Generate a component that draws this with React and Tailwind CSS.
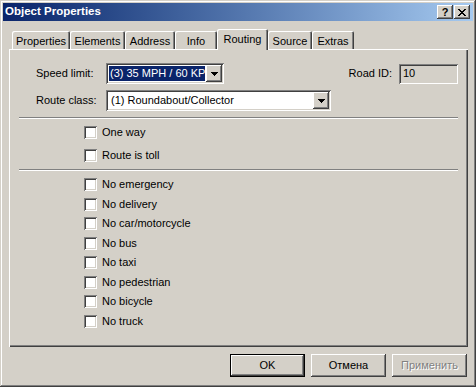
import React from "react";

const LABELS = {
  TITLE: "Object Properties",
  SPEED: "Speed limit:",
  SPEED_VALUE: "(3) 35 MPH / 60 KPH",
  ROUTE_CLASS: "Route class:",
  ROUTE_VALUE: "(1) Roundabout/Collector",
  ROAD_ID: "Road ID:",
  OK: "OK",
  CANCEL: "Отмена",
  APPLY: "Применить",
};

const TABS = [
  { label: "Properties", w: "w-[58px]" },
  { label: "Elements", w: "w-[55px]" },
  { label: "Address", w: "w-[50px]" },
  { label: "Info", w: "w-[42px]" },
  { label: "Routing", w: "w-[51px]", active: true },
  { label: "Source", w: "w-[44px]" },
  { label: "Extras", w: "w-[42px]" },
];

const RESTRICTIONS = [
  "No emergency",
  "No delivery",
  "No car/motorcycle",
  "No bus",
  "No taxi",
  "No pedestrian",
  "No bicycle",
  "No truck",
];

const raised =
  "shadow-[inset_-1px_-1px_#404040,inset_1px_1px_#ffffff,inset_-2px_-2px_#808080,inset_2px_2px_#d4d0c8]";
const sunken =
  "shadow-[inset_1px_1px_#808080,inset_-1px_-1px_#ffffff,inset_2px_2px_#404040,inset_-2px_-2px_#d4d0c8]";

function Arrow() {
  return (
    <svg width="7" height="4" viewBox="0 0 7 4" shapeRendering="crispEdges">
      <path d="M0 0h7v1H0zM1 1h5v1H1zM2 2h3v1H2zM3 3h1v1H3z" fill="#000" />
    </svg>
  );
}

function DropButton() {
  return (
    <div className={`w-[16px] flex items-center justify-center bg-[#d4d0c8] ${raised}`}>
      <Arrow />
    </div>
  );
}

function Checkbox({ label }) {
  return (
    <div className="flex items-center h-[13px] ml-[75px]">
      <div className={`w-[13px] h-[13px] bg-white ${sunken}`} />
      <span className="ml-[5px] leading-none">{label}</span>
    </div>
  );
}

function Separator() {
  return <div className="ml-[10px] w-[439px] h-[2px] border-t border-[#808080] border-b border-b-white" />;
}

function Tab({ label, w, active }) {
  if (active) {
    return (
      <div
        className={`${w} h-[21px] -mb-[1px] relative z-10 bg-[#d4d0c8] rounded-t-[2px] flex items-center justify-center shadow-[inset_1px_1px_#ffffff,inset_-1px_0_#404040,inset_-2px_0_#808080]`}
      >
        {label}
      </div>
    );
  }
  return (
    <div
      className={`${w} h-[18px] bg-[#d4d0c8] rounded-t-[2px] flex items-center justify-center pt-[2px] shadow-[inset_1px_1px_#ffffff,inset_-1px_0_#404040,inset_-2px_0_#808080]`}
    >
      {label}
    </div>
  );
}

function Button({ children, isDefault, disabled }) {
  return (
    <div
      className={`w-[75px] h-[23px] flex items-center justify-center bg-[#d4d0c8] ${
        isDefault ? "border border-black" : ""
      }`}
    >
      <div className={`w-full h-full flex items-center justify-center ${raised}`}>
        <span
          className={
            disabled ? "text-[#808080] [text-shadow:1px_1px_0_#ffffff]" : "text-black"
          }
        >
          {children}
        </span>
      </div>
    </div>
  );
}

export default function App() {
  return (
    <div className="w-[476px] h-[387px] bg-[#d4d0c8] p-[3px] flex flex-col text-[11px] text-black font-['Liberation_Sans',Arial,sans-serif] shadow-[inset_-1px_-1px_#404040,inset_1px_1px_#d4d0c8,inset_-2px_-2px_#808080,inset_2px_2px_#ffffff]">
      <div className="h-[18px] flex items-center bg-linear-to-r from-[#0a246a] to-[#a6caf0] pl-[2px] pr-[3px]">
        <span className="text-white font-bold text-[11.5px] leading-none">{LABELS.TITLE}</span>
        <div className="ml-auto flex gap-[1px]">
          <div className={`w-[16px] h-[14px] bg-[#d4d0c8] flex items-center justify-center font-bold text-[11px] leading-none ${raised}`}>
            ?
          </div>
          <div className={`w-[16px] h-[14px] bg-[#d4d0c8] flex items-center justify-center ${raised}`}>
            <svg width="8" height="7" viewBox="0 0 8 7" shapeRendering="crispEdges">
              <path
                d="M0 0h2v1H0zM6 0h2v1H6zM1 1h2v1H1zM5 1h2v1H5zM2 2h4v1H2zM3 3h2v1H3zM2 4h4v1H2zM1 5h2v1H1zM5 5h2v1H5zM0 6h2v1H0zM6 6h2v1H6z"
                fill="#000"
              />
            </svg>
          </div>
        </div>
      </div>

      <div className="mt-[8px] ml-[6px] w-[459px]">
        <div className="flex items-end h-[20px] pl-[3px]">
          {TABS.map((t) => (
            <Tab key={t.label} {...t} />
          ))}
        </div>
        <div className="h-[298px] flex flex-col shadow-[inset_1px_1px_#ffffff,inset_-1px_-1px_#404040,inset_-2px_-2px_#808080]">
          <div className="flex items-center h-[21px] mt-[14px]">
            <span className="w-[97px] pl-[27px]">{LABELS.SPEED}</span>
            <div className={`w-[118px] h-[21px] bg-white p-[2px] flex ${sunken}`}>
              <div className="flex-1 m-[1px] bg-[#0a246a] text-white overflow-hidden whitespace-nowrap flex items-center pl-[1px]">
                {LABELS.SPEED_VALUE}
              </div>
              <DropButton />
            </div>
            <span className="ml-auto">{LABELS.ROAD_ID}</span>
            <div className={`w-[59px] h-[20px] ml-[7px] mr-[10px] flex items-center pl-[4px] ${sunken}`}>
              10
            </div>
          </div>
          <div className="flex items-center h-[21px] mt-[6px]">
            <span className="w-[97px] pl-[27px]">{LABELS.ROUTE_CLASS}</span>
            <div className={`w-[225px] h-[21px] bg-white p-[2px] flex ${sunken}`}>
              <div className="flex-1 flex items-center pl-[3px] whitespace-nowrap overflow-hidden">
                {LABELS.ROUTE_VALUE}
              </div>
              <DropButton />
            </div>
          </div>
          <div className="mt-[6px]">
            <Separator />
          </div>
          <div className="mt-[7px]">
            <Checkbox label="One way" />
          </div>
          <div className="mt-[10px]">
            <Checkbox label="Route is toll" />
          </div>
          <div className="mt-[7px]">
            <Separator />
          </div>
          <div className="mt-[7px] flex flex-col">
            {RESTRICTIONS.map((r) => (
              <div key={r} className="h-[19.5px]">
                <Checkbox label={r} />
              </div>
            ))}
          </div>
        </div>
      </div>

      <div className="mt-[7px] flex justify-end gap-[6px] pr-[6px]">
        <Button isDefault>{LABELS.OK}</Button>
        <Button>{LABELS.CANCEL}</Button>
        <Button disabled>{LABELS.APPLY}</Button>
      </div>
    </div>
  );
}
